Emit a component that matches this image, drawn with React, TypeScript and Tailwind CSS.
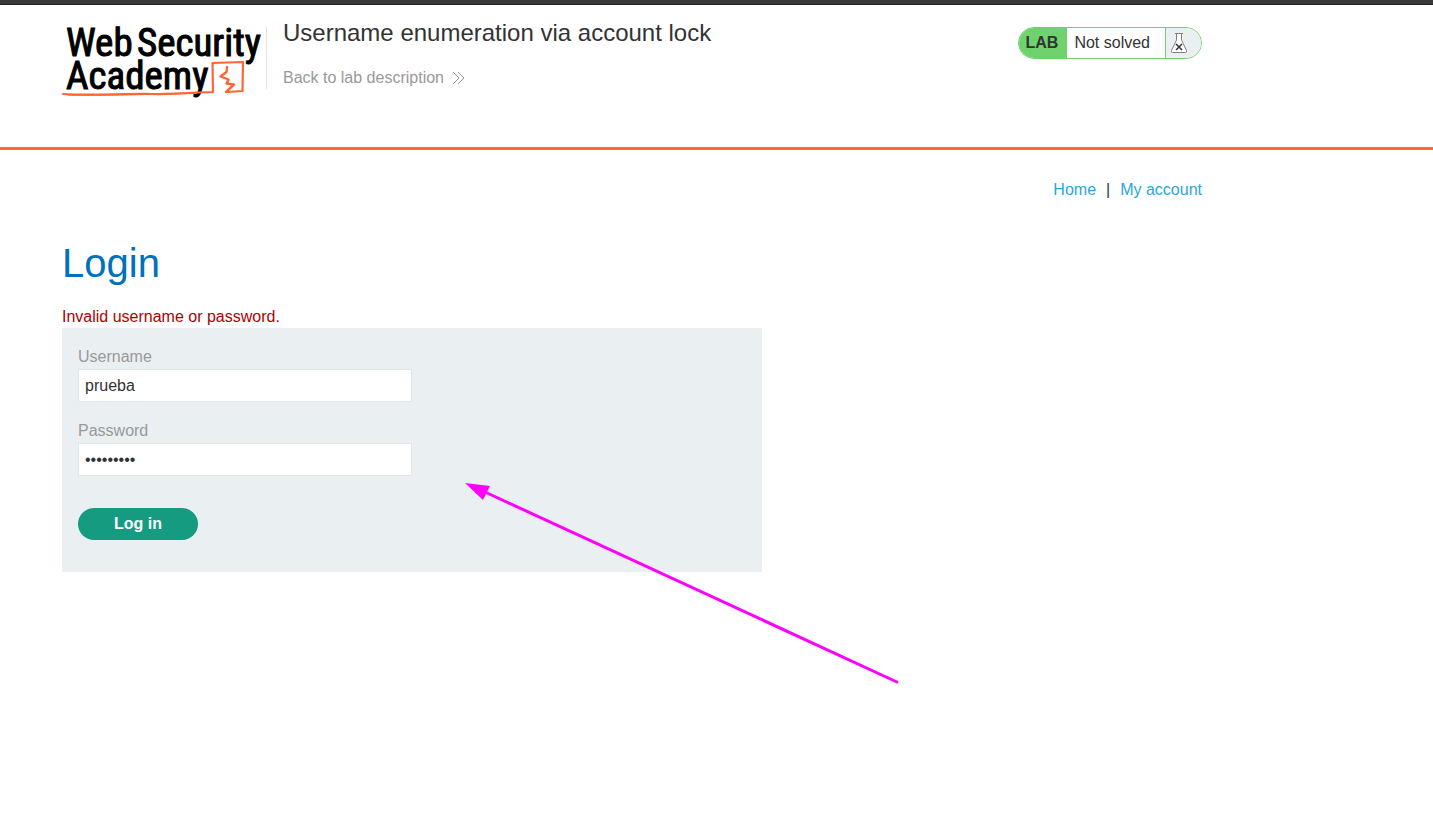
import React from 'react';

function AcademyLogo() {
  return (
    <svg width="202" height="74" viewBox="0 0 202 74" role="img" aria-label="Web Security Academy" className="block shrink-0">
      <g
        fontFamily='"Roboto Condensed", Roboto, sans-serif'
        fontSize="39"
        fill="#000"
        stroke="#000"
        strokeWidth="1"
      >
        <text x="4" y="31">Web</text>
        <text x="75" y="31">Security</text>
        <text x="4" y="64">Academy</text>
      </g>
      <g fill="none" stroke="#ff6633" strokeWidth="2.2" strokeLinecap="round" strokeLinejoin="round">
        <path d="M1 69 C30 71 60 68.500 90 69 S130 67.500 151 67 L150.500 38 L181 37 L180.500 66 L165 67" />
        <path d="M6 70.200 C40 70.500 90 69.500 124 68.500" strokeWidth="1" />
        <path d="M165 42 L164.500 47 L158.500 51.500 L166.500 54.500 L164.500 58.500 L172 59.500 L164 67" strokeWidth="2.400" />
      </g>
    </svg>
  );
}

function FlaskIcon() {
  return (
    <svg width="18" height="22" viewBox="0 0 18 22" aria-hidden="true">
      <path d="M6.500 1.500 V8 L1.500 18.500 Q1 20.500 2.500 20.500 H15.500 Q17 20.500 16.500 18.500 L11.500 8 V1.500" fill="#fff" stroke="#808080" />
      <path d="M5 1.500 H13" stroke="#808080" />
      <path d="M6 12 L12 18 M12 12 L6 18" stroke="#333" strokeWidth="1.500" />
    </svg>
  );
}

function LabStatus() {
  return (
    <div className="flex h-8 shrink-0 overflow-hidden rounded-full border border-[#6fd26d] text-base text-[#333332]">
      <span className="flex items-center bg-[#6fd26d] pr-[9px] pl-[7px] font-bold">LAB</span>
      <span className="flex items-center bg-white pr-[15px] pl-[7px]">Not solved</span>
      <span className="flex w-9 items-center border-l border-[#6fd26d] bg-[#eaeff2] pl-1">
        <FlaskIcon />
      </span>
    </div>
  );
}

function Field({ id, label, type, value }: { id: string; label: string; type: string; value: string }) {
  return (
    <div className="mb-[18px]">
      <label htmlFor={id} className="mb-px block leading-[22px] text-[#999]">{label}</label>
      <input
        id={id}
        name={id}
        type={type}
        defaultValue={value}
        className="block h-[33px] w-full max-w-[334px] border border-[#e1e5e8] bg-white px-1.5 text-[#333332] outline-none"
      />
    </div>
  );
}

function Pointer() {
  return (
    <svg width="434" height="201" viewBox="0 0 434 201" aria-hidden="true" className="pointer-events-none absolute top-[155px] left-[403px]">
      <path d="M20 9 L433 199.500" stroke="#ff00ff" strokeWidth="3" />
      <path d="M0 0 L25 3 L18 17 Z" fill="#ff00ff" />
    </svg>
  );
}

export default function App() {
  return (
    <div className="min-h-screen bg-white font-['Liberation_Sans',Arial,sans-serif] text-base leading-6 text-[#333332]">
      <div className="h-[5px] border-b border-[#222] bg-[#383838]" />
      <header className="border-b-3 border-[#ff6633] px-[62px] pt-[18px] pb-12">
        <div className="flex max-w-[1140px] items-start">
          <div className="pt-0.5">
            <AcademyLogo />
          </div>
          <div className="mt-1 ml-0.5 h-[62px] shrink-0 border-l border-[#e4e4e4]" />
          <div className="ml-4 grow">
            <h2 className="-mt-1 text-2xl leading-7">Username enumeration via account lock</h2>
            <a href="#lab" className="mt-[19px] flex items-center gap-2 text-[#999]">
              Back to lab description
              <svg width="13" height="14" viewBox="0 0 13 14" fill="none" stroke="#999" aria-hidden="true">
                <path d="M1 1 L7 7 L1 13 M6 1 L12 7 L6 13" />
              </svg>
            </a>
          </div>
          <div className="mt-1">
            <LabStatus />
          </div>
        </div>
      </header>
      <main className="px-[62px]">
        <div className="max-w-[1140px]">
          <nav className="flex justify-end gap-2 pt-7">
            <a href="#home" className="text-[#29a7de]">Home</a>
            <span className="px-0.5">|</span>
            <a href="#account" className="text-[#29a7de]">My account</a>
          </nav>
          <h1 className="mt-9 text-[40px] leading-[50px] text-[#0071bc]">Login</h1>
          <p className="mt-[18px] leading-[22px] text-[#b00000]">Invalid username or password.</p>
          <div className="relative max-w-[700px]">
            <form className="bg-[#eaeff2] px-4 pt-[18px] pb-8" onSubmit={(e) => e.preventDefault()}>
              <Field id="username" label="Username" type="text" value="prueba" />
              <Field id="password" label="Password" type="password" value="contrasen" />
              <div className="pt-3.5">
                <button type="submit" className="block h-8 w-[120px] rounded-full bg-[#159b80] font-bold text-white">
                  Log in
                </button>
              </div>
            </form>
            <Pointer />
          </div>
        </div>
      </main>
    </div>
  );
}
